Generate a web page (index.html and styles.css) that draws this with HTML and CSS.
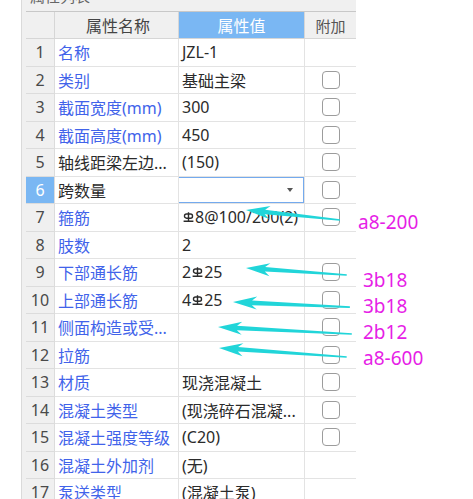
FILE: index.html
```html
<!DOCTYPE html>
<html lang="zh-CN">

<head>
    <meta charset="UTF-8">
    <title>属性列表</title>
    <link rel="stylesheet" href="styles.css">
</head>

<body>
    <div class="panel">
        <div class="title"><span>属性列表</span></div>
        <div class="sheet">
            <div class="row head">
                <div class="num"></div>
                <div class="name">属性名称</div>
                <div class="val">属性值</div>
                <div class="add">附加</div>
            </div>
            <div class="row">
                <div class="num">1</div>
                <div class="name">名称</div>
                <div class="val">JZL-1</div>
                <div class="add"></div>
            </div>
            <div class="row">
                <div class="num">2</div>
                <div class="name">类别</div>
                <div class="val">基础主梁</div>
                <div class="add"><span class="box"></span></div>
            </div>
            <div class="row">
                <div class="num">3</div>
                <div class="name">截面宽度(mm)</div>
                <div class="val">300</div>
                <div class="add"><span class="box"></span></div>
            </div>
            <div class="row">
                <div class="num">4</div>
                <div class="name">截面高度(mm)</div>
                <div class="val">450</div>
                <div class="add"><span class="box"></span></div>
            </div>
            <div class="row">
                <div class="num">5</div>
                <div class="name plain">轴线距梁左边...</div>
                <div class="val">(150)</div>
                <div class="add"><span class="box"></span></div>
            </div>
            <div class="row current">
                <div class="num">6</div>
                <div class="name plain">跨数量</div>
                <div class="val edit"><div class="select"><span class="caret"></span></div></div>
                <div class="add"><span class="box"></span></div>
            </div>
            <div class="row">
                <div class="num">7</div>
                <div class="name">箍筋</div>
                <div class="val"><svg class="rebar" viewBox="0 0 11 10"><rect x="1.5" y="2" width="8" height="4.2" rx="2"/><path d="M5.5 0.3V9.2M0.6 9.2H10.4"/></svg>8@100/200(2)</div>
                <div class="add"><span class="box"></span></div>
            </div>
            <div class="row">
                <div class="num">8</div>
                <div class="name">肢数</div>
                <div class="val">2</div>
                <div class="add"></div>
            </div>
            <div class="row">
                <div class="num">9</div>
                <div class="name">下部通长筋</div>
                <div class="val">2<svg class="rebar" viewBox="0 0 11 10"><rect x="1.5" y="2" width="8" height="4.2" rx="2"/><path d="M5.5 0.3V9.2M0.6 9.2H10.4"/></svg>25</div>
                <div class="add"><span class="box"></span></div>
            </div>
            <div class="row">
                <div class="num">10</div>
                <div class="name">上部通长筋</div>
                <div class="val">4<svg class="rebar" viewBox="0 0 11 10"><rect x="1.5" y="2" width="8" height="4.2" rx="2"/><path d="M5.5 0.3V9.2M0.6 9.2H10.4"/></svg>25</div>
                <div class="add"><span class="box"></span></div>
            </div>
            <div class="row">
                <div class="num">11</div>
                <div class="name">侧面构造或受...</div>
                <div class="val"></div>
                <div class="add"><span class="box"></span></div>
            </div>
            <div class="row">
                <div class="num">12</div>
                <div class="name">拉筋</div>
                <div class="val"></div>
                <div class="add"><span class="box"></span></div>
            </div>
            <div class="row">
                <div class="num">13</div>
                <div class="name">材质</div>
                <div class="val">现浇混凝土</div>
                <div class="add"><span class="box"></span></div>
            </div>
            <div class="row">
                <div class="num">14</div>
                <div class="name">混凝土类型</div>
                <div class="val">(现浇碎石混凝...</div>
                <div class="add"><span class="box"></span></div>
            </div>
            <div class="row">
                <div class="num">15</div>
                <div class="name">混凝土强度等级</div>
                <div class="val">(C20)</div>
                <div class="add"><span class="box"></span></div>
            </div>
            <div class="row">
                <div class="num">16</div>
                <div class="name">混凝土外加剂</div>
                <div class="val">(无)</div>
                <div class="add"></div>
            </div>
            <div class="row">
                <div class="num">17</div>
                <div class="name">泵送类型</div>
                <div class="val">(混凝土泵)</div>
                <div class="add"></div>
            </div>
        </div>
    </div>

    <!-- annotations drawn over the table -->
    <svg class="arrows" viewBox="0 0 473 499">
        <polygon points="0,0 24,-6.5 19,-2.3 94.5,-0.8 94.5,0.8 19,2.3 24,6.5" transform="translate(246 210) rotate(6.1)"/>
        <polygon points="0,0 24,-6.5 19,-2.3 101,-0.8 101,0.8 19,2.3 24,6.5" transform="translate(246 268) rotate(4)"/>
        <polygon points="0,0 24,-6.5 19,-2.3 117,-0.8 117,0.8 19,2.3 24,6.5" transform="translate(233 302) rotate(2.5)"/>
        <polygon points="0,0 24,-6.5 19,-2.3 134,-0.8 134,0.8 19,2.3 24,6.5" transform="translate(218 327) rotate(3)"/>
        <polygon points="0,0 24,-6.5 19,-2.3 128,-0.8 128,0.8 19,2.3 24,6.5" transform="translate(219 348) rotate(4)"/>
    </svg>
    <span class="note" style="left:358px;top:213px">a8-200</span>
    <span class="note" style="left:363px;top:271px">3b18</span>
    <span class="note" style="left:363px;top:297px">3b18</span>
    <span class="note" style="left:363px;top:323px">2b12</span>
    <span class="note" style="left:363px;top:349px">a8-600</span>
</body>

</html>
```

FILE: styles.css
```css
body {
    margin: 0;
    height: 499px;
    overflow: hidden;
    position: relative;
    background-color: #fff;
    font-family: "Noto Sans", "Noto Sans CJK SC", sans-serif;
}

.panel {
    margin-left: 21px;
    width: 335px;
    height: 499px;
    padding-left: 4px;
    box-sizing: border-box;
    background-color: #f0f0f0;
    border-left: 1px solid #dadada;
}

.title {
    height: 11px;
    overflow: hidden;
    font-size: 15px;
    color: #666;
}

.title span {
    display: block;
    margin-top: -14px;
    padding-left: 4px;
    line-height: 20px;
}

.sheet {
    border-top: 1px solid #c8c8c8;
    background-color: #fff;
}

.row {
    display: grid;
    grid-template-columns: 29px 124px 126px 51px;
    height: 27.5px;
}

.row > div {
    display: flex;
    align-items: center;
    box-sizing: border-box;
    border-right: 1px solid #e3e3e3;
    border-bottom: 1px solid #e3e3e3;
    white-space: nowrap;
    overflow: hidden;
    font-size: 16px;
    color: #2b2b2b;
}

.row .num {
    justify-content: center;
    background-color: #f0f0f0;
    border-color: #dcdcdc;
    color: #4a4a4a;
}

.row .name {
    padding-left: 3px;
    color: #4163ea;
}

.row .name.plain {
    color: #2b2b2b;
}

.row .val {
    padding-left: 3px;
}

.row .add {
    justify-content: center;
    border-right: none;
}

/* header */
.row.head {
    height: 27px;
}

.row.head > div {
    justify-content: center;
    background-color: #f0f0f0;
    border-color: #d6d6d6;
    color: #444;
}

.row.head .val {
    padding-left: 0;
    background-color: #7ab7f3;
    color: #fff;
}

.row.head .add {
    font-size: 15px;
    color: #555;
}

/* selected row */
.row.current .num {
    background-color: #7ab7f3;
    color: #fff;
}

.row .val.edit {
    padding-left: 0;
    align-items: stretch;
}

.select {
    flex: 1;
    display: flex;
    justify-content: flex-end;
    align-items: center;
    margin-left: -2px;
    padding-right: 10px;
    border: 1.5px solid #74aaee;
}

.caret {
    width: 0;
    height: 0;
    border-left: 3px solid transparent;
    border-right: 3px solid transparent;
    border-top: 4px solid #555;
}

.rebar {
    width: 11px;
    height: 10px;
    margin: 0 1px;
    vertical-align: 5px;
    fill: none;
    stroke: #2b2b2b;
    stroke-width: 1.4;
}

.box {
    width: 18px;
    height: 18px;
    box-sizing: border-box;
    border: 1.5px solid #9c9c9c;
    border-radius: 4px;
    background-color: #fff;
}

/* annotations */
.arrows {
    position: absolute;
    left: 0;
    top: 0;
    width: 473px;
    height: 499px;
    fill: #21d5d9;
}

.note {
    position: absolute;
    font-family: "Noto Sans", sans-serif;
    font-size: 19px;
    line-height: 19px;
    color: #e61ee6;
}
```
